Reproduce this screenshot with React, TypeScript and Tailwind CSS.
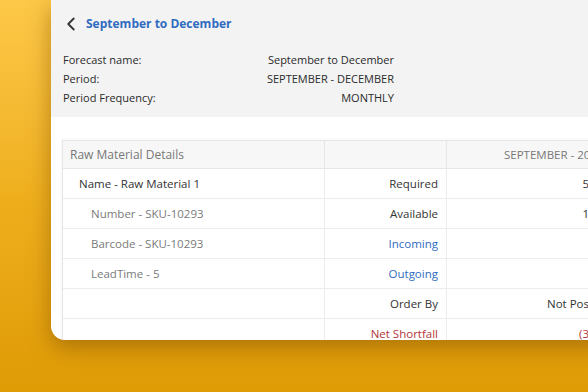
import { ChevronLeft } from "lucide-react";

const font = { fontFamily: '"Open Sans", "Noto Sans", sans-serif' };

type Row = {
  left: string;
  leftCls: string;
  label: string;
  labelCls: string;
  value: string;
  valueCls: string;
};

const rows: Row[] = [
  { left: "Name - Raw Material 1", leftCls: "pl-[16px] text-[#333]", label: "Required", labelCls: "text-[#333]", value: "5", valueCls: "text-[#333]" },
  { left: "Number - SKU-10293", leftCls: "pl-[28px] text-[#7a7a7a]", label: "Available", labelCls: "text-[#333]", value: "1", valueCls: "text-[#333]" },
  { left: "Barcode - SKU-10293", leftCls: "pl-[28px] text-[#7a7a7a]", label: "Incoming", labelCls: "text-[#2f6cbf]", value: "", valueCls: "" },
  { left: "LeadTime - 5", leftCls: "pl-[28px] text-[#7a7a7a]", label: "Outgoing", labelCls: "text-[#2f6cbf]", value: "", valueCls: "" },
  { left: "", leftCls: "", label: "Order By", labelCls: "text-[#333]", value: "Not Pos", valueCls: "text-[#333]" },
  { left: "", leftCls: "", label: "Net Shortfall", labelCls: "text-[#b3363a]", value: "(3", valueCls: "text-[#b3363a]" },
];

function InfoRow({ label, value }: { label: string; value: string }) {
  return (
    <div className="flex h-[19px] items-center justify-between w-[331px] text-[11px] text-[#2a2a2a]">
      <span>{label}</span>
      <span>{value}</span>
    </div>
  );
}

export default function App() {
  return (
    <div
      className="relative w-[588px] h-[392px] overflow-hidden bg-gradient-to-b from-[#fdc847] via-[#efaf1d] to-[#df9b04]"
      style={font}
    >
      <div className="ml-[51px] w-[600px] h-[340px] bg-white rounded-bl-[14px] overflow-hidden shadow-[0_8px_22px_rgba(130,80,0,0.55)]">
        <div className="bg-[#f3f3f3] h-[117px] pl-[12px] pt-[13px]">
          <div className="flex items-center h-[22px]">
            <ChevronLeft className="w-[22px] h-[22px] text-[#333] -ml-[3px]" strokeWidth={2} />
            <span className="ml-[4px] text-[12px] font-bold text-[#2f6cbf]">September to December</span>
          </div>
          <div className="mt-[16px]">
            <InfoRow label="Forecast name:" value="September to December" />
            <InfoRow label="Period:" value="SEPTEMBER - DECEMBER" />
            <InfoRow label="Period Frequency:" value="MONTHLY" />
          </div>
        </div>
        <div className="pl-[11px] pt-[23px]">
          <div className="border border-[#e6e6e6] shadow-[0_0_4px_rgba(0,0,0,0.06)] text-[11.5px]">
            <div className="grid grid-cols-[261px_122px_200px] h-[28px] bg-[#f7f7f7] border-b border-[#e6e6e6]">
              <div className="flex items-center pl-[7px] text-[12px] text-[#777]">Raw Material Details</div>
              <div className="border-l border-[#e6e6e6]" />
              <div className="border-l border-[#e6e6e6] flex items-center pl-[57px] text-[#777] overflow-hidden whitespace-nowrap">SEPTEMBER - 2022</div>
            </div>
            {rows.map((r, i) => (
              <div key={i} className="grid grid-cols-[261px_122px_200px] h-[30px] border-b border-[#ececec]">
                <div className={`flex items-center ${r.leftCls}`}>{r.left}</div>
                <div className={`border-l border-[#ececec] flex items-center justify-end pr-[8px] ${r.labelCls}`}>{r.label}</div>
                <div className={`border-l border-[#ececec] flex items-center justify-end pr-[57px] ${r.valueCls}`}>{r.value}</div>
              </div>
            ))}
          </div>
        </div>
      </div>
    </div>
  );
}
